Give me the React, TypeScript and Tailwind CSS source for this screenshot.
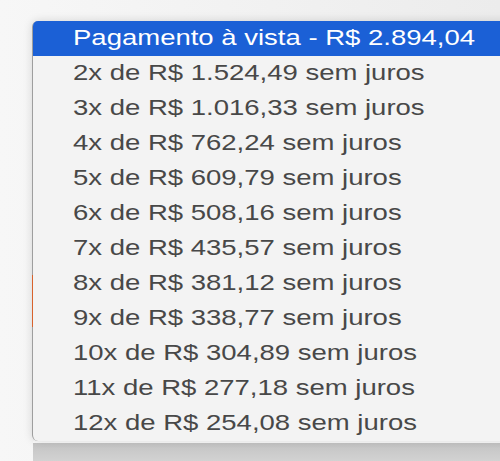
import React from 'react'

const options = [
  'Pagamento à vista - R$ 2.894,04',
  '2x de R$ 1.524,49 sem juros',
  '3x de R$ 1.016,33 sem juros',
  '4x de R$ 762,24 sem juros',
  '5x de R$ 609,79 sem juros',
  '6x de R$ 508,16 sem juros',
  '7x de R$ 435,57 sem juros',
  '8x de R$ 381,12 sem juros',
  '9x de R$ 338,77 sem juros',
  '10x de R$ 304,89 sem juros',
  '11x de R$ 277,18 sem juros',
  '12x de R$ 254,08 sem juros',
]

const App: React.FC = () => {
  const selected = 0

  return (
    <div className="w-[500px] h-[461px] overflow-hidden bg-gradient-to-r from-[#f7f7f7] to-[#ececec] font-['Liberation_Sans',Arial,sans-serif]">
      <div className="pl-[32px] pt-[21px]">
        {/* Dropdown list */}
        <div className="relative w-[490px] rounded-l-[6px] border-l border-[#9e9e9e] bg-[#f3f3f3] shadow-[0_0_10px_rgba(0,0,0,0.14)]">
          <span className="absolute -left-px top-[254px] h-[52px] w-px bg-[#d8622c]" />
          <ul>
            {options.map((label, i) => (
              <li
                key={label}
                className={
                  i === selected
                    ? 'h-[35px] pl-[40px] leading-[33px] text-[22px] text-white bg-[#1b60d6] rounded-tl-[5px]'
                    : 'h-[35px] pl-[40px] leading-[33px] text-[22px] text-[#484848]'
                }
              >
                <span className="inline-block origin-left scale-x-[1.25] whitespace-nowrap">{label}</span>
              </li>
            ))}
          </ul>
        </div>
        <div className="h-[20px] ml-px border-t-2 border-[#fbfbfb] bg-gradient-to-b from-[#c4c4c4] to-[#d2d2d2]" />
      </div>
    </div>
  )
}

export default App
